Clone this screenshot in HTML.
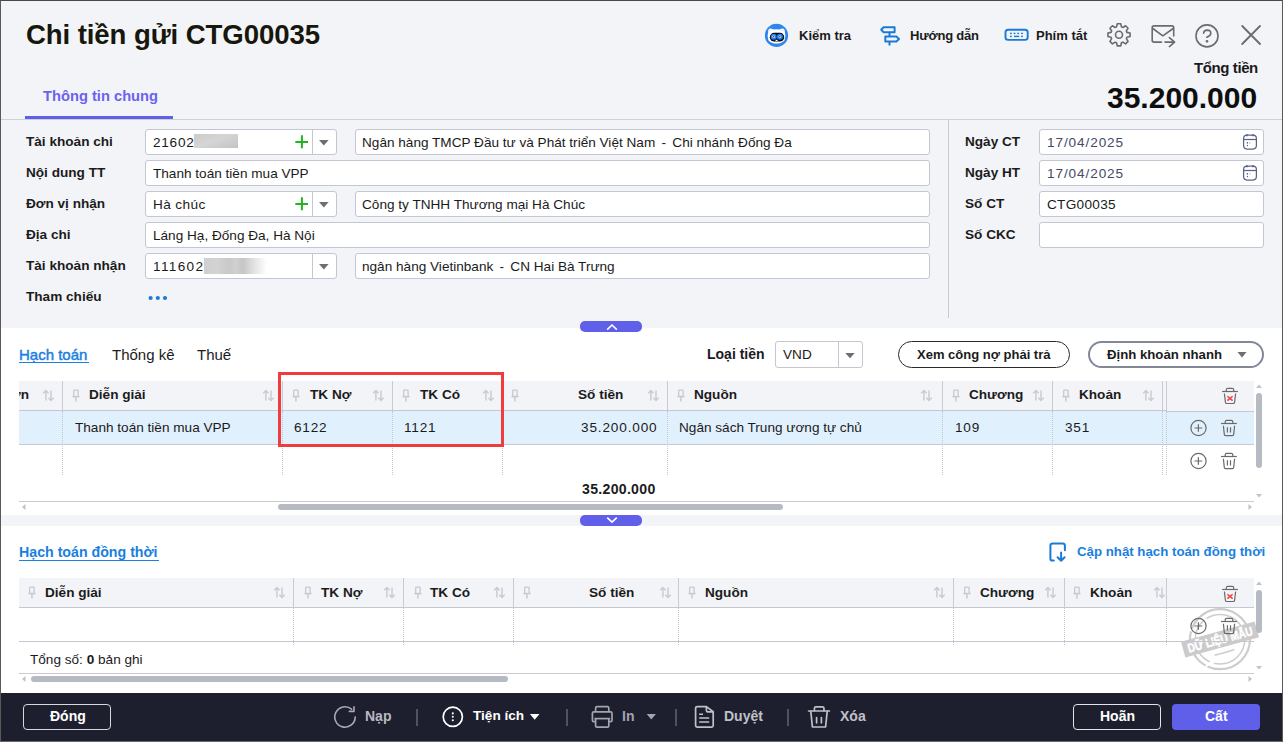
<!DOCTYPE html>
<html><head><meta charset="utf-8">
<style>
*{box-sizing:border-box;margin:0;padding:0}
html,body{width:1283px;height:742px;overflow:hidden;background:#f3f4f8}
body{font-family:"Liberation Sans",sans-serif;color:#1b1b1b;position:relative}
.a{position:absolute;white-space:nowrap}
.b{font-weight:700}
.win{position:absolute;left:0;top:0;width:1283px;height:742px;border:1px solid #5c5856;border-top-color:#4b4846;border-bottom-color:#6a6663}
.inp{position:absolute;background:#fff;border:1px solid #c4c7d3;border-radius:3px;height:26px}
.lbl{position:absolute;font-weight:700;font-size:13.6px;left:26px;white-space:nowrap}
.itxt{position:absolute;font-size:13.6px;white-space:nowrap;color:#1b1b1b}
.hdr{position:absolute;background:#f3f4f8;border-bottom:1px solid #c5c8d0}
.ht{position:absolute;font-weight:700;font-size:13.6px;white-space:nowrap;top:387px}
.cell{position:absolute;font-size:13.6px;white-space:nowrap}
.vdiv{position:absolute;width:1px;background:#c8cbd3}
.dot{position:absolute;width:0;border-left:1px dotted #c3c6ce}
</style></head><body>

<!-- header -->
<!-- toolbar -->
<svg class="a" style="left:760px;top:20px" width="34" height="32" viewBox="760 20 34 32">
 <circle cx="776.5" cy="35.4" r="11.6" fill="#2f86ee"/>
 <path d="M768.2 32 Q767.8 28.2 771 28.4 Q772.6 28.6 773.6 29.6 Q776.5 29 779.4 29.6 Q780.4 28.6 782 28.4 Q785.2 28.2 784.8 32 Q786.2 36.5 784.6 40.2 Q781.6 43.6 776.5 43.6 Q771.4 43.6 768.4 40.2 Q766.8 36.5 768.2 32Z" fill="#fff"/>
 <path d="M769 31 Q770.5 29.5 772.5 30 M780.5 30 Q782.5 29.5 784 31" stroke="#d6e6fb" stroke-width="1" fill="none"/>
 <rect x="769.8" y="32.8" width="14.4" height="8.8" rx="4.4" fill="#0a0a0e"/>
 <circle cx="773.7" cy="36.7" r="3" fill="#1f80f6"/>
 <circle cx="779.9" cy="36.7" r="3" fill="#1f80f6"/>
 <circle cx="773.7" cy="36.7" r="1.3" fill="#e8f1ff"/>
 <circle cx="779.9" cy="36.7" r="1.3" fill="#e8f1ff"/>
 <circle cx="773.7" cy="36.7" r="0.7" fill="#2a2a40"/>
 <circle cx="779.9" cy="36.7" r="0.7" fill="#2a2a40"/>
 <rect x="775.6" y="39.8" width="2" height="1.2" fill="#fff"/>
</svg>
<div class="a b" style="left:799px;top:28px;font-size:13px;color:#1b1b1b">Kiểm tra</div>
<svg class="a" style="left:876px;top:20px" width="30" height="30" viewBox="876 20 30 30" fill="none" stroke="#1a7ad8" stroke-width="2" stroke-linejoin="round">
 <path d="M881.2 29.8 L883.6 27.3 L894.6 27.3 L894.6 32.2 L883.6 32.2 Z"/>
 <path d="M889.5 32.2 V36.6 M889.5 41.4 V45.6"/>
 <path d="M885.3 36.6 L896.4 36.6 L899 39 L896.4 41.4 L885.3 41.4 Z"/>
</svg>
<div class="a b" style="left:910px;top:28px;font-size:13px;color:#1b1b1b;letter-spacing:-0.2px">Hướng dẫn</div>
<svg class="a" style="left:1000px;top:22px" width="34" height="26" viewBox="1000 22 34 26">
 <rect x="1005.5" y="29.7" width="22.2" height="10.2" rx="2.6" fill="none" stroke="#1a7ad8" stroke-width="1.9"/>
 <g fill="#1a7ad8"><rect x="1010" y="32.7" width="1.8" height="1.4"/><rect x="1013.6" y="32.7" width="1.8" height="1.4"/><rect x="1017.3" y="32.7" width="1.8" height="1.4"/><rect x="1021.1" y="32.7" width="1.8" height="1.4"/>
 <rect x="1010" y="35.7" width="1.8" height="1.4"/><rect x="1014" y="35.7" width="5.2" height="1.4"/><rect x="1021.1" y="35.7" width="1.8" height="1.4"/></g>
</svg>
<div class="a b" style="left:1036px;top:28px;font-size:13px;color:#1b1b1b">Phím tắt</div>
<svg class="a" style="left:1100px;top:18px" width="80" height="34" viewBox="1100 18 80 34" fill="none" stroke="#6b6b6b" stroke-width="1.6" stroke-linejoin="round" stroke-linecap="round">
 <path d="M1116.56 26.87 L1117.25 23.74 L1120.75 23.74 L1121.44 26.87 L1122.88 27.46 L1125.58 25.74 L1128.06 28.22 L1126.34 30.92 L1126.93 32.36 L1130.06 33.05 L1130.06 36.55 L1126.93 37.24 L1126.34 38.68 L1128.06 41.38 L1125.58 43.86 L1122.88 42.14 L1121.44 42.73 L1120.75 45.86 L1117.25 45.86 L1116.56 42.73 L1115.12 42.14 L1112.42 43.86 L1109.94 41.38 L1111.66 38.68 L1111.07 37.24 L1107.94 36.55 L1107.94 33.05 L1111.07 32.36 L1111.66 30.92 L1109.94 28.22 L1112.42 25.74 L1115.12 27.46 Z"/>
 <circle cx="1119" cy="34.8" r="3.5"/>
 <path d="M1161.5 42.1 H1154 Q1152.2 42.1 1152.2 40.3 V27.6 Q1152.2 25.9 1154 25.9 H1171.9 Q1173.7 25.9 1173.7 27.6 V36"/>
 <path d="M1152.8 28.5 L1162.8 35.8 L1173.2 28.5"/>
 <path d="M1165 42.1 H1174.6 M1169.4 37.6 L1174.6 42.1 L1169.4 46.6"/>
</svg>
<svg class="a" style="left:1190px;top:18px" width="80" height="34" viewBox="1190 18 80 34" fill="none" stroke="#6b6b6b" stroke-width="1.6" stroke-linecap="round">
 <circle cx="1207" cy="35.9" r="11"/>
 <path d="M1203.6 33.2 Q1203.8 30.1 1207.2 30.1 Q1210.8 30.2 1210.8 33.2 Q1210.8 35.6 1206.8 37.2"/>
 <circle cx="1207" cy="41.3" r="0.6" fill="#6b6b6b"/>
 <path d="M1242.2 26 L1260 44 M1260 26 L1242.2 44" stroke-width="1.8"/>
</svg>

<div class="a b" style="left:1194px;top:59px;font-size:15px;letter-spacing:-0.4px;color:#1b1b1b">Tổng tiền</div>
<div class="a b" style="left:1107px;top:81px;font-size:30px;color:#0e0e0e">35.200.000</div>

<div class="a b" style="left:26px;top:19px;font-size:27.6px;color:#17170c;letter-spacing:-0.1px">Chi tiền gửi CTG00035</div>

<div class="a b" style="left:43px;top:88px;font-size:14.7px;color:#6b62ee">Thông tin chung</div>
<div class="a" style="left:25px;top:116px;width:148px;height:3px;background:#5f5fea"></div>
<div class="a" style="left:1px;top:119px;width:1281px;height:1px;background:#cfd1d8"></div>


<!-- form -->
<div class="lbl" style="top:134px">Tài khoản chi</div>
<div class="lbl" style="top:165px">Nội dung TT</div>
<div class="lbl" style="top:196px">Đơn vị nhận</div>
<div class="lbl" style="top:227px">Địa chi</div>
<div class="lbl" style="top:258px">Tài khoản nhận</div>
<div class="lbl" style="top:289px">Tham chiếu</div>
<div class="inp" style="left:145px;top:129px;width:192px"></div><div class="a" style="left:312px;top:130px;width:1px;height:24px;background:#c4c6d0"></div><svg class="a" style="left:318px;top:139px" width="12" height="7" viewBox="0 0 12 7"><path d="M1 1 H10.6 L5.8 6.4Z" fill="#6e6e6e"/></svg><svg class="a" style="left:294px;top:134px" width="16" height="16" viewBox="0 0 16 16"><path d="M1.3 7.9 H14 M7.9 1.3 V14.2" stroke="#22b322" stroke-width="2"/></svg><div class="itxt" style="left:153px;top:135px;letter-spacing:0.75px">21602</div><div class="a" style="left:194px;top:134px;width:44px;height:14px;background:linear-gradient(160deg,#cbcbcb 0%,#d5d5d5 45%,#c3c3c3 100%)"></div>
<div class="inp" style="left:355px;top:129px;width:575px"></div><div class="itxt" style="left:362px;top:135px">Ngân hàng TMCP Đầu tư và Phát triển Việt Nam <span style="margin:0 2.5px">-</span> Chi nhánh Đống Đa</div>
<div class="inp" style="left:145px;top:160px;width:785px"></div><div class="itxt" style="left:153px;top:166px">Thanh toán tiền mua VPP</div>
<div class="inp" style="left:145px;top:191px;width:192px"></div><div class="a" style="left:312px;top:192px;width:1px;height:24px;background:#c4c6d0"></div><svg class="a" style="left:318px;top:201px" width="12" height="7" viewBox="0 0 12 7"><path d="M1 1 H10.6 L5.8 6.4Z" fill="#6e6e6e"/></svg><svg class="a" style="left:294px;top:196px" width="16" height="16" viewBox="0 0 16 16"><path d="M1.3 7.9 H14 M7.9 1.3 V14.2" stroke="#22b322" stroke-width="2"/></svg><div class="itxt" style="left:153px;top:197px;letter-spacing:0.4px">Hà chúc</div>
<div class="inp" style="left:355px;top:191px;width:575px"></div><div class="itxt" style="left:362px;top:197px">Công ty TNHH Thương mại Hà Chúc</div>
<div class="inp" style="left:145px;top:222px;width:785px"></div><div class="itxt" style="left:153px;top:228px">Láng Hạ, Đống Đa, Hà Nội</div>
<div class="inp" style="left:145px;top:253px;width:192px"></div><div class="a" style="left:312px;top:254px;width:1px;height:24px;background:#c4c6d0"></div><svg class="a" style="left:318px;top:263px" width="12" height="7" viewBox="0 0 12 7"><path d="M1 1 H10.6 L5.8 6.4Z" fill="#6e6e6e"/></svg><div class="itxt" style="left:153px;top:259px;letter-spacing:1.35px">111602</div><div class="a" style="left:204px;top:258px;width:63px;height:16px;background:linear-gradient(90deg,#cfcfcf 0%,#d3d3d3 20%,#c9c9c9 40%,#d0d0d0 50%,#c6c6c6 62%,#e6e6e6 82%,#ffffff 100%)"></div>
<div class="inp" style="left:355px;top:253px;width:575px"></div><div class="itxt" style="left:362px;top:259px">ngân hàng Vietinbank <span style="margin:0 2.5px">-</span> CN Hai Bà Trưng</div>
<svg class="a" style="left:146px;top:294px" width="24" height="8" viewBox="0 0 24 8"><g fill="#1a7ad8"><circle cx="4.6" cy="4" r="2.1"/><circle cx="11.8" cy="4" r="2.1"/><circle cx="19" cy="4" r="2.1"/></g></svg>
<div class="a" style="left:948px;top:120px;width:1px;height:198px;background:#c9cbd3"></div>
<div class="lbl" style="left:965px;top:134px">Ngày CT</div>
<div class="inp" style="left:1039px;top:129px;width:225px"></div>
<div class="itxt" style="left:1047px;top:135px;color:#444a66;letter-spacing:0.9px">17/04/2025</div>
<svg class="a" style="left:1240px;top:132px" width="20" height="20" viewBox="0 0 20 20" fill="none" stroke="#5c6286" stroke-width="1.25"><rect x="3.6" y="3.2" width="12.8" height="13.8" rx="3.4"/><path d="M3.6 7.5 H16.4"/><path d="M7 2.2 V4.2 M13 2.2 V4.2" stroke-width="1.7"/><g fill="#5c6286" stroke="none"><rect x="6.8" y="10" width="1.2" height="1.6"/><rect x="9.2" y="10.2" width="1.2" height="1.2" opacity="0.5"/><circle cx="7.4" cy="13.5" r="0.7"/></g></svg>
<div class="lbl" style="left:965px;top:165px">Ngày HT</div>
<div class="inp" style="left:1039px;top:160px;width:225px"></div>
<div class="itxt" style="left:1047px;top:166px;color:#444a66;letter-spacing:0.9px">17/04/2025</div>
<svg class="a" style="left:1240px;top:163px" width="20" height="20" viewBox="0 0 20 20" fill="none" stroke="#5c6286" stroke-width="1.25"><rect x="3.6" y="3.2" width="12.8" height="13.8" rx="3.4"/><path d="M3.6 7.5 H16.4"/><path d="M7 2.2 V4.2 M13 2.2 V4.2" stroke-width="1.7"/><g fill="#5c6286" stroke="none"><rect x="6.8" y="10" width="1.2" height="1.6"/><rect x="9.2" y="10.2" width="1.2" height="1.2" opacity="0.5"/><circle cx="7.4" cy="13.5" r="0.7"/></g></svg>
<div class="lbl" style="left:965px;top:196px">Số CT</div>
<div class="inp" style="left:1039px;top:191px;width:225px"></div>
<div class="itxt" style="left:1047px;top:197px;color:#1b1b1b;letter-spacing:0.3px">CTG00035</div>
<div class="lbl" style="left:965px;top:227px">Số CKC</div>
<div class="inp" style="left:1039px;top:222px;width:225px"></div>

<!-- icon defs -->
<svg width="0" height="0" style="position:absolute">
 <defs>
  <symbol id="pin" viewBox="0 0 10 14"><g fill="none" stroke="#c6c9d1" stroke-width="1.3"><path d="M1.7 7.2 V1.8 Q1.7 1.2 2.3 1.2 H5.5 Q6.1 1.2 6.1 1.8 V7.2"/><path d="M0.4 7.6 H7.6" stroke-width="1.5"/><path d="M3.9 8 V12.4" stroke-width="1.5"/></g></symbol>
  <symbol id="sort" viewBox="0 0 14 14"><g fill="none" stroke="#c9ccd4" stroke-width="1.5" stroke-linejoin="round"><path d="M3.9 1.8 V11.5 M1.2 4.3 L3.9 1.6 L6.6 4.3"/><path d="M9 1.6 V11.3 M6.3 8.8 L9 11.5 L11.7 8.8"/></g></symbol>
  <symbol id="plusc" viewBox="0 0 18 18"><g fill="none" stroke="#6a6a6a" stroke-width="1.2"><circle cx="9.5" cy="9" r="7.6"/><path d="M5.5 9 H13.3 M9.4 5.3 V12.7"/></g></symbol>
  <symbol id="trash" viewBox="0 0 18 18"><g fill="none" stroke="#6a6a6a" stroke-width="1.2" stroke-linejoin="round"><path d="M1 4.5 H16.9"/><path d="M5.2 4.4 V2.8 Q5.2 1.4 6.6 1.4 H11.4 Q12.8 1.4 12.8 2.8 V4.4"/><path d="M3.4 6.8 L4.3 15.4 Q4.4 16.6 5.6 16.6 H12.4 Q13.6 16.6 13.7 15.4 L14.6 6.8"/><path d="M7.4 8.3 V13.5 M10.5 8.3 V13.5"/></g></symbol>
  <symbol id="trashx" viewBox="0 0 18 18"><g fill="none" stroke="#6a6a6a" stroke-width="1.2" stroke-linejoin="round"><path d="M1.1 4.5 H16.9"/><path d="M5.3 4.4 V2.8 Q5.3 1.3 6.8 1.3 H11.2 Q12.7 1.3 12.7 2.8 V4.4"/><path d="M3.4 6.6 L4.4 15.2 Q4.5 16.5 5.8 16.5 H12.2 Q13.5 16.5 13.6 15.2 L14.6 6.6"/></g><path d="M6.4 9.2 L11.6 13.6 M11.6 9.2 L6.4 13.6" stroke="#f04040" stroke-width="1.5"/></symbol>
 </defs>
</svg>

<div class="a" style="left:1px;top:328px;width:1281px;height:187px;background:#fff"></div>
<div class="a" style="left:580px;top:321px;width:62px;height:11px;background:#5f5fea;border-radius:5px"></div>
<svg class="a" style="left:604px;top:321px" width="16" height="11" viewBox="0 0 16 11"><path d="M3.2 8.6 L8 4 L12.8 8.6" fill="none" stroke="#fff" stroke-width="1.6"/></svg>
<div class="a" style="left:19px;top:346px;font-size:15px;color:#1a7fe0;-webkit-text-stroke:0.45px #1a7fe0">Hạch toán</div>
<div class="a" style="left:19px;top:362px;width:70px;height:1px;background:#1a7fe0"></div>
<div class="a" style="left:112px;top:346px;font-size:15px;color:#1b1b1b">Thống kê</div>
<div class="a" style="left:197px;top:346px;font-size:15px;color:#1b1b1b">Thuế</div>
<div class="a b" style="left:707px;top:346px;font-size:14px">Loại tiền</div>
<div class="a" style="left:775px;top:341px;width:88px;height:27px;border:1px solid #c4c6d0;border-radius:3px;background:#fff"></div>
<div class="a" style="left:838px;top:342px;width:1px;height:25px;background:#c4c6d0"></div>
<div class="a" style="left:783px;top:347px;font-size:13.6px">VND</div>
<svg class="a" style="left:844px;top:352px" width="12" height="7" viewBox="0 0 12 7"><path d="M1.3 1 H10.7 L6 6.2Z" fill="#6e6e6e"/></svg>
<div class="a" style="left:898px;top:341px;width:172px;height:27px;border:1px solid #2a2a2a;border-radius:14px;background:#fff"></div>
<div class="a b" style="left:917px;top:347px;font-size:13px">Xem công nợ phải trả</div>
<div class="a" style="left:1088px;top:341px;width:176px;height:27px;border:2px solid #838897;border-radius:14px;background:#fff"></div>
<div class="a b" style="left:1107px;top:347px;font-size:13.2px">Định khoản nhanh</div>
<svg class="a" style="left:1236px;top:351px" width="12" height="8" viewBox="0 0 12 8"><path d="M1.5 1 H10.5 L6 6.5Z" fill="#6e6e6e"/></svg>
<div class="a" style="left:19px;top:381px;width:1235px;height:30px;background:#f3f4f8;border-bottom:1px solid #c5c8d0"></div>
<div class="a" style="left:19px;top:411px;width:1148px;height:34px;background:#e1f0fd;border-bottom:1px solid #c5c8d0"></div>
<div class="a" style="left:1166px;top:411px;width:88px;height:34px;background:#e1f0fd;border-bottom:1px solid #c5c8d0"></div>
<div class="a" style="left:1167px;top:410px;width:87px;height:1px;background:#f3f4f8"></div><div class="a" style="left:1167px;top:411px;width:87px;height:1px;background:#c5c8d0"></div>
<div class="vdiv" style="left:62px;top:381px;height:29px"></div>
<div class="vdiv" style="left:282px;top:381px;height:29px"></div>
<div class="vdiv" style="left:392px;top:381px;height:29px"></div>
<div class="vdiv" style="left:502px;top:381px;height:29px"></div>
<div class="vdiv" style="left:667px;top:381px;height:29px"></div>
<div class="vdiv" style="left:942px;top:381px;height:29px"></div>
<div class="vdiv" style="left:1052px;top:381px;height:29px"></div>
<div class="vdiv" style="left:1162px;top:381px;height:29px"></div>
<div class="vdiv" style="left:1166px;top:381px;height:29px"></div>
<div class="dot" style="left:62px;top:411px;height:64px"></div>
<div class="dot" style="left:282px;top:411px;height:64px"></div>
<div class="dot" style="left:392px;top:411px;height:64px"></div>
<div class="dot" style="left:502px;top:411px;height:64px"></div>
<div class="dot" style="left:667px;top:411px;height:64px"></div>
<div class="dot" style="left:942px;top:411px;height:64px"></div>
<div class="dot" style="left:1052px;top:411px;height:64px"></div>
<div class="dot" style="left:1162px;top:411px;height:64px"></div>
<div class="dot" style="left:1166px;top:411px;height:64px"></div>
<div class="a" style="left:19px;top:381px;width:12px;height:29px;overflow:hidden"><div class="ht" style="left:-8px;top:6px">ơn</div></div>
<svg class="a" style="left:42px;top:389px" width="14" height="14"><use href="#sort"/></svg>
<div class="ht" style="left:89px">Diễn giải</div>
<svg class="a" style="left:72px;top:389px" width="10" height="14"><use href="#pin"/></svg>
<svg class="a" style="left:262px;top:389px" width="14" height="14"><use href="#sort"/></svg>
<div class="ht" style="left:310px">TK Nợ</div>
<svg class="a" style="left:292px;top:389px" width="10" height="14"><use href="#pin"/></svg>
<svg class="a" style="left:372px;top:389px" width="14" height="14"><use href="#sort"/></svg>
<div class="ht" style="left:420px">TK Có</div>
<svg class="a" style="left:402px;top:389px" width="10" height="14"><use href="#pin"/></svg>
<svg class="a" style="left:482px;top:389px" width="14" height="14"><use href="#sort"/></svg>
<div class="ht" style="left:578px">Số tiền</div>
<svg class="a" style="left:511px;top:389px" width="10" height="14"><use href="#pin"/></svg>
<svg class="a" style="left:647px;top:389px" width="14" height="14"><use href="#sort"/></svg>
<div class="ht" style="left:694px">Nguồn</div>
<svg class="a" style="left:677px;top:389px" width="10" height="14"><use href="#pin"/></svg>
<svg class="a" style="left:920px;top:389px" width="14" height="14"><use href="#sort"/></svg>
<div class="ht" style="left:969px">Chương</div>
<svg class="a" style="left:952px;top:389px" width="10" height="14"><use href="#pin"/></svg>
<svg class="a" style="left:1032px;top:389px" width="14" height="14"><use href="#sort"/></svg>
<div class="ht" style="left:1079px">Khoản</div>
<svg class="a" style="left:1062px;top:389px" width="10" height="14"><use href="#pin"/></svg>
<svg class="a" style="left:1142px;top:389px" width="14" height="14"><use href="#sort"/></svg>
<svg class="a" style="left:1221px;top:387px" width="18" height="18"><use href="#trashx"/></svg>
<div class="cell" style="left:75px;top:420px;">Thanh toán tiền mua VPP</div>
<div class="cell" style="left:294px;top:420px;letter-spacing:0.8px">6122</div>
<div class="cell" style="left:404px;top:420px;letter-spacing:0.8px">1121</div>
<div class="cell" style="left:581px;top:420px;letter-spacing:0.85px">35.200.000</div>
<div class="cell" style="left:679px;top:420px;">Ngân sách Trung ương tự chủ</div>
<div class="cell" style="left:955px;top:420px;letter-spacing:0.8px">109</div>
<div class="cell" style="left:1065px;top:420px;letter-spacing:0.8px">351</div>
<svg class="a" style="left:1189px;top:419px" width="18" height="18"><use href="#plusc"/></svg>
<svg class="a" style="left:1220px;top:419px" width="18" height="18"><use href="#trash"/></svg>
<svg class="a" style="left:1189px;top:452px" width="18" height="18"><use href="#plusc"/></svg>
<svg class="a" style="left:1220px;top:452px" width="18" height="18"><use href="#trash"/></svg>
<div class="a b" style="left:582px;top:481px;font-size:14.1px;letter-spacing:0.3px">35.200.000</div>
<div class="a" style="left:19px;top:501px;width:1235px;height:1px;background:#c8cbd3"></div>
<div class="a" style="left:278px;top:504px;width:505px;height:6px;background:#b6bac2;border-radius:3px"></div>
<svg class="a" style="left:20px;top:503px" width="8" height="8" viewBox="0 0 8 8"><path d="M5.5 1 V7 L2 4Z" fill="#c0c3ca"/></svg>
<svg class="a" style="left:1246px;top:503px" width="8" height="8" viewBox="0 0 8 8"><path d="M2.5 1 V7 L6 4Z" fill="#c0c3ca"/></svg>
<div class="a" style="left:1256px;top:393px;width:6px;height:75px;background:#b6bac2;border-radius:3px"></div>
<svg class="a" style="left:1255px;top:383px" width="8" height="6" viewBox="0 0 8 6"><path d="M1 5 H7 L4 1.5Z" fill="#c0c3ca"/></svg>
<svg class="a" style="left:1255px;top:493px" width="8" height="6" viewBox="0 0 8 6"><path d="M1 1 H7 L4 4.5Z" fill="#c0c3ca"/></svg>
<div class="a" style="left:278px;top:372px;width:226px;height:75px;border:3px solid #ef3d3d"></div>
<div class="a" style="left:1px;top:526px;width:1281px;height:167px;background:#fff"></div>
<svg class="a" style="left:1175px;top:600px" width="90" height="80" viewBox="1175 600 90 80">
 <g fill="none" stroke="#cdcdcd">
  <circle cx="1220" cy="639.2" r="30" stroke-width="2.2" stroke-dasharray="60 2 40 3 70 2"/>
  <circle cx="1220" cy="639.2" r="24.8" stroke-width="1.5" stroke-dasharray="45 4 50 3"/>
  <path d="M1214.5 655.3 Q1225 653 1234.4 649.5" stroke-width="1.6"/>
 </g>
 <g transform="rotate(-15.4 1220 639.5)">
  <rect x="1181.8" y="631.4" width="76.4" height="16.3" fill="#cbcbcb"/>
  <text x="1186.5" y="644" textLength="67" lengthAdjust="spacingAndGlyphs" font-family="Liberation Sans" font-weight="700" font-size="12.5" fill="#fff" stroke="#fff" stroke-width="0.5">DỮ LIỆU MẪU</text>
 </g>
</svg>

<div class="a" style="left:580px;top:515px;width:62px;height:11px;background:#5f5fea;border-radius:5px"></div>
<svg class="a" style="left:604px;top:515px" width="16" height="11" viewBox="0 0 16 11"><path d="M3.2 2.6 L8 7.2 L12.8 2.6" fill="none" stroke="#fff" stroke-width="1.6"/></svg>
<div class="a b" style="left:19px;top:544px;font-size:14.2px;color:#1a7fe0">Hạch toán đồng thời</div>
<div class="a" style="left:19px;top:560px;width:140px;height:1px;background:#1a7fe0"></div>
<svg class="a" style="left:1046px;top:540px" width="24" height="24" viewBox="1046 540 24 24" fill="none" stroke="#1a7ad8" stroke-width="2" stroke-linecap="round" stroke-linejoin="round"><path d="M1053.8 560.6 H1052.6 Q1050.4 560.6 1050.4 558.4 V545.7 Q1050.4 543.5 1052.6 543.5 H1062.7 Q1064.9 543.5 1064.9 545.7 V550.2"/><path d="M1061.1 552.6 V560.8 M1057.6 557.3 L1061.1 560.8 L1064.6 557.3"/></svg>
<div class="a b" style="left:1077px;top:544px;font-size:13.25px;color:#1a7fe0">Cập nhật hạch toán đồng thời</div>
<div class="a" style="left:19px;top:578px;width:1235px;height:30px;background:#f3f4f8;border-bottom:1px solid #c5c8d0"></div>
<div class="a" style="left:19px;top:641px;width:1235px;height:1px;background:#c5c8d0"></div>
<div class="vdiv" style="left:293px;top:578px;height:29px"></div>
<div class="dot" style="left:293px;top:608px;height:37px"></div>
<div class="vdiv" style="left:403px;top:578px;height:29px"></div>
<div class="dot" style="left:403px;top:608px;height:37px"></div>
<div class="vdiv" style="left:513px;top:578px;height:29px"></div>
<div class="dot" style="left:513px;top:608px;height:37px"></div>
<div class="vdiv" style="left:678px;top:578px;height:29px"></div>
<div class="dot" style="left:678px;top:608px;height:37px"></div>
<div class="vdiv" style="left:953px;top:578px;height:29px"></div>
<div class="dot" style="left:953px;top:608px;height:37px"></div>
<div class="vdiv" style="left:1064px;top:578px;height:29px"></div>
<div class="dot" style="left:1064px;top:608px;height:37px"></div>
<div class="vdiv" style="left:1166px;top:578px;height:29px"></div>
<div class="dot" style="left:1166px;top:608px;height:37px"></div>
<div class="ht" style="left:45px;top:585px">Diễn giải</div>
<svg class="a" style="left:28px;top:586px" width="10" height="14"><use href="#pin"/></svg>
<svg class="a" style="left:273px;top:586px" width="14" height="14"><use href="#sort"/></svg>
<div class="ht" style="left:321px;top:585px">TK Nợ</div>
<svg class="a" style="left:304px;top:586px" width="10" height="14"><use href="#pin"/></svg>
<svg class="a" style="left:383px;top:586px" width="14" height="14"><use href="#sort"/></svg>
<div class="ht" style="left:430px;top:585px">TK Có</div>
<svg class="a" style="left:414px;top:586px" width="10" height="14"><use href="#pin"/></svg>
<svg class="a" style="left:493px;top:586px" width="14" height="14"><use href="#sort"/></svg>
<div class="ht" style="left:589px;top:585px">Số tiền</div>
<svg class="a" style="left:523px;top:586px" width="10" height="14"><use href="#pin"/></svg>
<svg class="a" style="left:659px;top:586px" width="14" height="14"><use href="#sort"/></svg>
<div class="ht" style="left:705px;top:585px">Nguồn</div>
<svg class="a" style="left:688px;top:586px" width="10" height="14"><use href="#pin"/></svg>
<svg class="a" style="left:933px;top:586px" width="14" height="14"><use href="#sort"/></svg>
<div class="ht" style="left:980px;top:585px">Chương</div>
<svg class="a" style="left:963px;top:586px" width="10" height="14"><use href="#pin"/></svg>
<svg class="a" style="left:1044px;top:586px" width="14" height="14"><use href="#sort"/></svg>
<div class="ht" style="left:1090px;top:585px">Khoản</div>
<svg class="a" style="left:1073px;top:586px" width="10" height="14"><use href="#pin"/></svg>
<svg class="a" style="left:1153px;top:586px" width="14" height="14"><use href="#sort"/></svg>
<svg class="a" style="left:1221px;top:585px" width="18" height="18"><use href="#trashx"/></svg>
<svg class="a" style="left:1189px;top:617px" width="18" height="18"><use href="#plusc"/></svg>
<svg class="a" style="left:1220px;top:617px" width="18" height="18"><use href="#trash"/></svg>
<div class="a" style="left:30px;top:652px;font-size:13.6px">Tổng số: <b>0</b> bản ghi</div>
<div class="a" style="left:19px;top:673px;width:1235px;height:1px;background:#c8cbd3"></div>
<div class="a" style="left:31px;top:676px;width:477px;height:6px;background:#b6bac2;border-radius:3px"></div>
<svg class="a" style="left:20px;top:675px" width="8" height="8" viewBox="0 0 8 8"><path d="M5.5 1 V7 L2 4Z" fill="#c0c3ca"/></svg>
<svg class="a" style="left:1246px;top:675px" width="8" height="8" viewBox="0 0 8 8"><path d="M2.5 1 V7 L6 4Z" fill="#c0c3ca"/></svg>
<div class="a" style="left:1256px;top:590px;width:6px;height:43px;background:#b6bac2;border-radius:3px"></div>
<svg class="a" style="left:1255px;top:580px" width="8" height="6" viewBox="0 0 8 6"><path d="M1 5 H7 L4 1.5Z" fill="#c0c3ca"/></svg>
<svg class="a" style="left:1255px;top:665px" width="8" height="6" viewBox="0 0 8 6"><path d="M1 1 H7 L4 4.5Z" fill="#c0c3ca"/></svg>
<div class="a" style="left:1px;top:693px;width:1281px;height:48px;background:#1e1f2e"></div>
<div class="a" style="left:23px;top:704px;width:88px;height:26px;border:1px solid #d8d8dc;border-radius:4px"></div>
<div class="a b" style="left:50px;top:708px;font-size:14px;color:#fff">Đóng</div>
<svg class="a" style="left:332px;top:704px" width="26" height="26" viewBox="332 704 26 26" fill="none" stroke="#a8a9b2" stroke-width="1.6" stroke-linecap="round" stroke-linejoin="round"><path d="M355.2 717 A10.2 10.2 0 1 1 351.6 709.2"/><path d="M354 706.8 V711.4 H349.4"/></svg>
<div class="a b" style="left:365px;top:708px;font-size:14px;color:#b9bac2">Nạp</div>
<div class="a" style="left:416px;top:708.5px;width:2px;height:17px;background:#50525e"></div>
<svg class="a" style="left:440px;top:704px" width="26" height="26" viewBox="440 704 26 26"><circle cx="452.8" cy="716.8" r="9.6" fill="none" stroke="#fff" stroke-width="1.7"/><g fill="#fff"><circle cx="452.8" cy="713.4" r="1.05"/><circle cx="452.8" cy="716.8" r="1.05"/><circle cx="452.8" cy="720.2" r="1.05"/></g></svg>
<div class="a b" style="left:473px;top:708px;font-size:13.6px;color:#fff">Tiện ích</div>
<svg class="a" style="left:529px;top:713px" width="12" height="8" viewBox="0 0 12 8"><path d="M0.9 0.9 H10.5 L5.7 6.8Z" fill="#fff"/></svg>
<div class="a" style="left:566px;top:708.5px;width:2px;height:17px;background:#50525e"></div>
<svg class="a" style="left:589px;top:704px" width="26" height="26" viewBox="589 704 26 26" fill="none" stroke="#a3a4ae" stroke-width="1.7" stroke-linejoin="round"><path d="M595.6 711.6 V708 Q595.6 706.6 597 706.6 H607.4 Q608.8 706.6 608.8 708 V711.6"/><path d="M595.6 721.6 H593.8 Q592.4 721.6 592.4 720.2 V713.2 Q592.4 711.8 593.8 711.8 H610.6 Q612 711.8 612 713.2 V720.2 Q612 721.6 610.6 721.6 H608.8"/><path d="M594.4 718.6 H610.2"/><path d="M595.6 718.8 V725.8 Q595.6 727.2 597 727.2 H607.4 Q608.8 727.2 608.8 725.8 V718.8"/></svg>
<div class="a b" style="left:622px;top:708px;font-size:14px;color:#a3a4ae">In</div>
<svg class="a" style="left:645px;top:713px" width="12" height="8" viewBox="0 0 12 8"><path d="M1.7 0.9 H10.9 L6.3 6.6Z" fill="#a3a4ae"/></svg>
<div class="a" style="left:675px;top:708.5px;width:2px;height:17px;background:#50525e"></div>
<svg class="a" style="left:692px;top:704px" width="26" height="26" viewBox="692 704 26 26" fill="none" stroke="#c0c1c8" stroke-width="1.7" stroke-linejoin="round"><path d="M697.2 706.6 H706.4 L713.2 711.8 V725.6 Q713.2 727.2 711.6 727.2 H697.2 Q695.6 727.2 695.6 725.6 V708.2 Q695.6 706.6 697.2 706.6Z"/><path d="M706.4 706.8 V710.4 Q706.4 711.8 707.8 711.8 H713"/><path d="M699.2 714.2 H703 M699.2 718 H709.2 M699.2 722 H709.2" stroke-width="1.5"/></svg>
<div class="a b" style="left:724px;top:708px;font-size:14px;color:#c0c1c8">Duyệt</div>
<div class="a" style="left:787px;top:708.5px;width:2px;height:17px;background:#50525e"></div>
<svg class="a" style="left:806px;top:704px" width="26" height="26" viewBox="806 704 26 26" fill="none" stroke="#c0c1c8" stroke-width="1.7" stroke-linejoin="round" stroke-linecap="round"><path d="M808.6 711 H829.4"/><path d="M814.4 710.6 V708.4 Q814.4 706.8 816 706.8 H822.4 Q824 706.8 824 708.4 V710.6"/><path d="M810.8 711.4 L812.4 727 H825.6 L827.2 711.4"/><path d="M816.6 717.6 V722.8 M821.4 717.6 V722.8"/></svg>
<div class="a b" style="left:840px;top:708px;font-size:14px;color:#c0c1c8">Xóa</div>
<div class="a" style="left:1073px;top:704px;width:88px;height:26px;border:1px solid #e4e4e8;border-radius:4px"></div>
<div class="a b" style="left:1100px;top:708px;font-size:14px;color:#fff">Hoãn</div>
<div class="a" style="left:1172px;top:704px;width:88px;height:26px;background:#5f5fea;border-radius:4px"></div>
<div class="a b" style="left:1205px;top:708px;font-size:14px;color:#fff">Cất</div>
<div class="win"></div>
</body></html>
